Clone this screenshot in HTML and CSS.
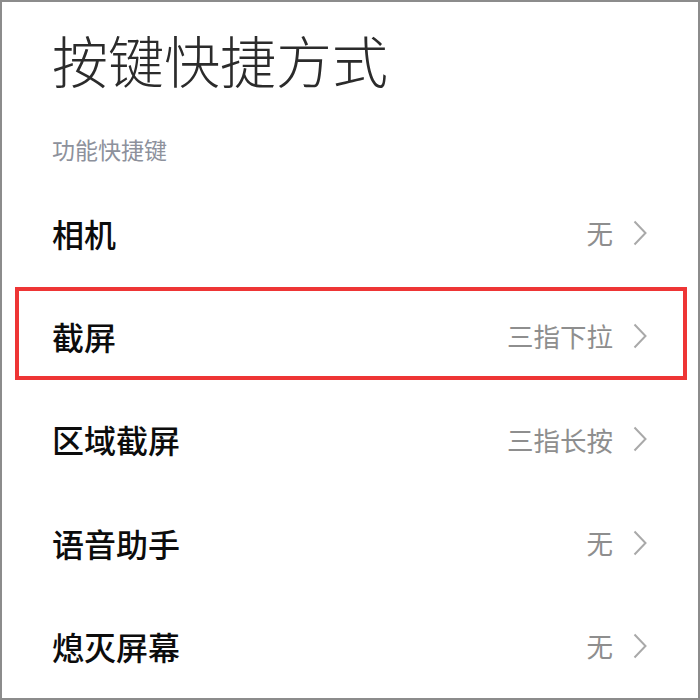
FILE: index.html
```html
<!DOCTYPE html>
<html lang="zh-CN">
<head>
  <meta charset="UTF-8" />
  <meta name="viewport" content="width=device-width, initial-scale=1.0" />
  <title>按键快捷方式</title>
  <link rel="stylesheet" href="styles.css">
</head>
<body>
  <div class="screen">
    <h1 class="title">按键快捷方式</h1>
    <div class="group-label">功能快捷键</div>

    <div class="list">
      <div class="row">
        <span class="label">相机</span>
        <span class="value">无<svg class="chevron" viewBox="0 0 14 26"><polyline points="1.5,1.5 12.5,13 1.5,24.5" /></svg></span>
      </div>
      <div class="row marked">
        <span class="label">截屏</span>
        <span class="value">三指下拉<svg class="chevron" viewBox="0 0 14 26"><polyline points="1.5,1.5 12.5,13 1.5,24.5" /></svg></span>
      </div>
      <div class="row">
        <span class="label">区域截屏</span>
        <span class="value">三指长按<svg class="chevron" viewBox="0 0 14 26"><polyline points="1.5,1.5 12.5,13 1.5,24.5" /></svg></span>
      </div>
      <div class="row">
        <span class="label">语音助手</span>
        <span class="value">无<svg class="chevron" viewBox="0 0 14 26"><polyline points="1.5,1.5 12.5,13 1.5,24.5" /></svg></span>
      </div>
      <div class="row">
        <span class="label">熄灭屏幕</span>
        <span class="value">无<svg class="chevron" viewBox="0 0 14 26"><polyline points="1.5,1.5 12.5,13 1.5,24.5" /></svg></span>
      </div>
    </div>
  </div>
</body>
</html>
```

FILE: styles.css
```css
* {
  box-sizing: border-box;
}

body {
  margin: 0;
  background: #ffffff;
  font-family: "Noto Sans CJK SC", "Noto Sans", sans-serif;
}

.screen {
  width: 700px;
  height: 700px;
  border: 2px solid #8c8c8c;
  padding: 29px 51px 0 50px;
  overflow: hidden;
}

.title {
  margin: 0;
  font-size: 56px;
  line-height: 56px;
  font-weight: 300;
  color: #2b2b2b;
}

.group-label {
  margin-top: 51px;
  font-size: 23px;
  line-height: 23px;
  color: #8d919c;
}

.list {
  margin-top: 20px;
  display: flex;
  flex-direction: column;
}

.row {
  position: relative;
  height: 103.3px;
  display: flex;
  align-items: center;
  justify-content: space-between;
}

.label {
  font-size: 32px;
  font-weight: 500;
  color: #0c0c0c;
}

.value {
  display: flex;
  align-items: center;
  gap: 20px;
  font-size: 26.5px;
  color: #8e8e8e;
}

.chevron {
  width: 14px;
  height: 26px;
  fill: none;
  stroke: #a9a9a9;
  stroke-width: 2;
}

.marked::after {
  content: '';
  position: absolute;
  left: -37px;
  right: -40px;
  top: 3px;
  bottom: 8px;
  border: 4px solid #ee3535;
}
```
